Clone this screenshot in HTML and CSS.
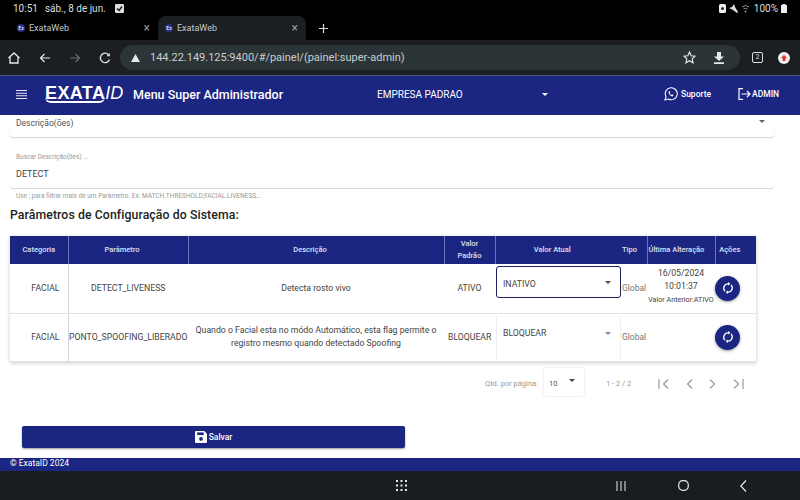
FILE: index.html
```html
<!DOCTYPE html>
<html lang="pt-BR">
<head>
    <meta charset="utf-8">
    <title>ExataWeb</title>
    <link rel="stylesheet" href="styles.css">
</head>
<body>
    <div class="status-bar">
        <div class="status-left">
            <span>10:51</span>
            <span class="status-date">sáb., 8 de jun.</span>
            <svg width="9" height="9" viewBox="0 0 9 9"><rect width="9" height="9" rx="1" fill="#ddd"/><path d="M2 4.5l2 2 3-4" fill="none" stroke="#111" stroke-width="1.3"/></svg>
        </div>
        <div class="status-right">
            <svg width="7" height="9" viewBox="0 0 7 9"><rect width="7" height="9" rx="1.5" fill="#eee"/><circle cx="3.5" cy="4.5" r="1.5" fill="#222"/></svg>
            <svg width="9" height="9" viewBox="0 0 9 9"><path d="M0 4l3-1 2-3 1 3 3 5-1 1-4-3z" fill="#ddd"/></svg>
            <svg width="9" height="9" viewBox="0 0 9 9" fill="none" stroke="#999"><path d="M1 3q3.500-3 7 0M2.500 5q2-1.500 4 0"/><circle cx="4.500" cy="7.500" r=".6" fill="#999"/></svg>
            <span>100%</span>
            <svg width="6" height="9" viewBox="0 0 6 9"><path d="M1.500 0h3v1H6v8H0V1h1.500z" fill="#eee"/></svg>
        </div>
    </div>

    <div class="tab-strip">
        <div class="tab">
            <span class="favicon">Ex</span>
            <span class="tab-title">ExataWeb</span>
            <span class="tab-close">×</span>
        </div>
        <div class="tab tab-active">
            <span class="favicon">Ex</span>
            <span class="tab-title">ExataWeb</span>
            <span class="tab-close">×</span>
        </div>
        <svg class="tab-new" width="9" height="9" viewBox="0 0 9 9"><path d="M4.500 0v9M0 4.500h9" stroke="#ddd" stroke-width="1.200"/></svg>
    </div>

    <div class="toolbar">
        <svg width="14" height="14" viewBox="0 0 14 14" fill="none" stroke="#e8e8e8" stroke-width="1.300"><path d="M1.500 7L7 2l5.500 5M3 6v6h8V6"/></svg>
        <svg class="tool-back" width="12" height="12" viewBox="0 0 12 12" fill="none" stroke="#e8e8e8" stroke-width="1.200"><path d="M11 6H1.500M5.500 2L1.500 6l4 4"/></svg>
        <svg class="tool-forward" width="12" height="12" viewBox="0 0 12 12" fill="none" stroke="#6a6e70" stroke-width="1.200"><path d="M1 6h9.500M6.500 2l4 4-4 4"/></svg>
        <svg class="tool-reload" width="12" height="12" viewBox="0 0 12 12" fill="none" stroke="#e8e8e8" stroke-width="1.300"><path d="M10.500 7.500A4.700 4.700 0 1 1 9.500 2.700"/><path d="M10.800 1v3.300H7.500z" fill="#e8e8e8" stroke="none"/></svg>
        <div class="omnibox">
            <svg width="9" height="8" viewBox="0 0 9 8"><path d="M4.500 0L9 8H0z" fill="#e8e8e8"/></svg>
            <span class="url">144.22.149.125:9400/#/painel/(painel:super-admin)</span>
            <svg class="omni-star" width="13" height="13" viewBox="0 0 13 13" fill="none" stroke="#e8e8e8" stroke-width="1.100"><path d="M6.500 1l1.700 3.700 4 .4-3 2.700.9 4-3.600-2.100-3.600 2.100.9-4-3-2.700 4-.4z"/></svg>
            <svg class="omni-download" width="12" height="12" viewBox="0 0 12 12" fill="#e8e8e8"><path d="M4 0h4v4.500h3L6 9 1 4.500h3zM1 10.300h10V12H1z"/></svg>
        </div>
        <span class="tab-count">2</span>
        <svg class="profile" width="12" height="12" viewBox="0 0 12 12"><circle cx="6" cy="6" r="6" fill="#f4f0ee"/><path d="M6 2.800L9 6.300H7.300V9H4.700V6.300H3z" fill="#d9342b"/></svg>
    </div>

    <header class="app-header">
        <svg class="menu-icon" width="11" height="9" viewBox="0 0 11 9"><path d="M0 .5h11M0 3.200h11M0 5.800h11M0 8.500h11" stroke="#e6e8f4" stroke-width="1.100"/></svg>
        <span class="logo"><span class="logo-exata">EXATA</span><span class="logo-id">ID</span></span>
        <span class="app-title">Menu Super Administrador</span>
        <div class="company">
            <span>EMPRESA PADRAO</span>
            <span class="caret caret-white"></span>
        </div>
        <div class="support">
            <svg width="14" height="14" viewBox="0 0 14 14" fill="none" stroke="#fff" stroke-width="1.100"><path d="M1 13l1-3.400A6 6 0 1 1 4.400 12z"/><path d="M5 4.300c-.8.700-.6 2 .7 3.400s2.500 2 3.400 1.300l.3-.9-1.500-.8-.7.600c-.7-.3-1.300-1-1.600-1.700l.6-.6-.7-1.500z" fill="#fff" stroke="none"/></svg>
            <span>Suporte</span>
        </div>
        <div class="user">
            <svg width="13" height="12" viewBox="0 0 13 12" fill="none" stroke="#fff" stroke-width="1.200"><path d="M5 .7H1v10.600h4M3.500 6H12M9 3l3 3-3 3"/></svg>
            <span>ADMIN</span>
        </div>
    </header>

    <main class="content">
        <div class="field field-select">
            <span>Descrição(ões)</span>
            <span class="caret caret-field"></span>
        </div>

        <div class="field field-search">
            <label class="field-label">Buscar Descrição(ões) ...</label>
            <span class="field-value">DETECT</span>
        </div>
        <p class="hint">Use ; para filtrar mais de um Parâmetro. Ex: MATCH.THRESHOLD;FACIAL.LIVENESS...</p>

        <h2 class="section-title">Parâmetros de Configuração do Sistema:</h2>

        <table class="params">
            <colgroup>
                <col class="col-cat">
                <col class="col-param">
                <col class="col-desc">
                <col class="col-default">
                <col class="col-current">
                <col class="col-type">
                <col class="col-date">
                <col class="col-actions">
            </colgroup>
            <thead>
                <tr>
                    <th class="th-center">Categoria</th>
                    <th>Parâmetro</th>
                    <th>Descrição</th>
                    <th class="th-center">Valor Padrão</th>
                    <th class="no-line">Valor Atual</th>
                    <th class="th-left">Tipo</th>
                    <th class="th-left">Última Alteração</th>
                    <th>Ações</th>
                </tr>
            </thead>
            <tbody>
                <tr>
                    <td class="cell-cat">FACIAL</td>
                    <td class="cell-line">DETECT_LIVENESS</td>
                    <td>Detecta rosto vivo</td>
                    <td>ATIVO</td>
                    <td class="cell-select">
                        <div class="value-select value-select-focus">
                            <span class="value-text">INATIVO</span>
                            <span class="caret caret-dark"></span>
                        </div>
                    </td>
                    <td class="cell-type">Global</td>
                    <td class="cell-date">
                        <div>16/05/2024</div>
                        <div>10:01:37</div>
                        <div class="previous">Valor Anterior:ATIVO</div>
                    </td>
                    <td class="cell-action"><button class="round-btn"><svg width="12" height="12" viewBox="0 0 12 12" fill="none" stroke="#fff" stroke-width="1.300"><path d="M6 1.800A4.200 4.200 0 0 0 3 9M6 10.200A4.200 4.200 0 0 0 9 3"/><path d="M6 0l2.500 1.800L6 3.600zM6 12l-2.500-1.800L6 8.400z" fill="#fff" stroke="none"/></svg></button></td>
                </tr>
                <tr>
                    <td class="cell-cat">FACIAL</td>
                    <td class="cell-line">PONTO_SPOOFING_LIBERADO</td>
                    <td>Quando o Facial esta no módo Automático, esta flag permite o registro mesmo quando detectado Spoofing</td>
                    <td>BLOQUEAR</td>
                    <td class="cell-select">
                        <div class="value-select">
                            <span>BLOQUEAR</span>
                            <span class="caret caret-muted"></span>
                        </div>
                    </td>
                    <td class="cell-type">Global</td>
                    <td class="cell-date"></td>
                    <td class="cell-action"><button class="round-btn"><svg width="12" height="12" viewBox="0 0 12 12" fill="none" stroke="#fff" stroke-width="1.300"><path d="M6 1.800A4.200 4.200 0 0 0 3 9M6 10.200A4.200 4.200 0 0 0 9 3"/><path d="M6 0l2.500 1.800L6 3.600zM6 12l-2.500-1.800L6 8.400z" fill="#fff" stroke="none"/></svg></button></td>
                </tr>
            </tbody>
        </table>

        <div class="pager">
            <span class="pager-label">Qtd. por página:</span>
            <div class="pager-size">
                <span>10</span>
                <span class="caret caret-dark"></span>
            </div>
            <span class="pager-range">1 - 2 / 2</span>
            <div class="pager-icons">
                <svg width="12" height="10" viewBox="0 0 12 10" fill="none" stroke="#9a9a9a" stroke-width="1.200"><path d="M1 0v10M10 .5L5.500 5l4.500 4.500"/></svg>
                <svg width="7" height="10" viewBox="0 0 7 10" fill="none" stroke="#9a9a9a" stroke-width="1.200"><path d="M6 .5L1.500 5 6 9.500"/></svg>
                <svg width="7" height="10" viewBox="0 0 7 10" fill="none" stroke="#9a9a9a" stroke-width="1.200"><path d="M1 .5L5.500 5 1 9.500"/></svg>
                <svg width="12" height="10" viewBox="0 0 12 10" fill="none" stroke="#9a9a9a" stroke-width="1.200"><path d="M11 0v10M2 .5L6.500 5 2 9.500"/></svg>
            </div>
        </div>

        <button class="save-btn">
            <svg width="12" height="12" viewBox="0 0 11 11"><path d="M1 0h7.500L11 2.500V10a1 1 0 0 1-1 1H1a1 1 0 0 1-1-1V1a1 1 0 0 1 1-1z" fill="#fff"/><rect x="2" y="1.300" width="6" height="2.400" fill="#1b2582"/><circle cx="5.500" cy="7.300" r="1.700" fill="#1b2582"/></svg>
            <span>Salvar</span>
        </button>
    </main>

    <footer class="app-footer">© ExataID 2024</footer>

    <div class="nav-bar">
        <svg class="nav-grid" width="11" height="11" viewBox="0 0 11 11" fill="#e8e8e8">
            <rect x="0" y="0" width="2" height="2"/><rect x="4.500" y="0" width="2" height="2"/><rect x="9" y="0" width="2" height="2"/>
            <rect x="0" y="4.500" width="2" height="2"/><rect x="4.500" y="4.500" width="2" height="2"/><rect x="9" y="4.500" width="2" height="2"/>
            <rect x="0" y="9" width="2" height="2"/><rect x="4.500" y="9" width="2" height="2"/><rect x="9" y="9" width="2" height="2"/>
        </svg>
        <svg class="nav-recent" width="10" height="10" viewBox="0 0 10 10" stroke="#c8c8c8" stroke-width="1.200"><path d="M1 0v10M5 0v10M9 0v10"/></svg>
        <svg class="nav-home" width="11" height="11" viewBox="0 0 11 11" fill="none" stroke="#e8e8e8" stroke-width="1.200"><rect x=".7" y=".7" width="9.600" height="9.600" rx="4"/></svg>
        <svg class="nav-back" width="7" height="12" viewBox="0 0 7 12" fill="none" stroke="#e8e8e8" stroke-width="1.200"><path d="M6 .5L.8 6 6 11.500"/></svg>
    </div>
</body>
</html>
```

FILE: styles.css
```css
* {
    box-sizing: border-box;
}
html, body {
    height: 100%;
}
body {
    margin: 0;
    width: 800px;
    height: 500px;
    overflow: hidden;
    display: flex;
    flex-direction: column;
    font-family: Roboto, "Liberation Sans", sans-serif;
    background-color: #fff;
    color: #333;
}

/* Android status bar */
.status-bar {
    height: 16px;
    padding: 0 13px;
    display: flex;
    align-items: center;
    justify-content: space-between;
    background-color: #000;
    color: #ddd;
    font-size: 10px;
}
.status-left,
.status-right {
    display: flex;
    align-items: center;
    gap: 7px;
}
.status-left svg {
    margin-left: 2px;
}
.status-right {
    gap: 3px;
}
.status-right span {
    margin-left: 1px;
}

/* Browser chrome */
.tab-strip {
    height: 24px;
    padding-left: 10px;
    display: flex;
    align-items: stretch;
    background-color: #000;
}
.tab {
    width: 148px;
    padding: 0 8px 0 7px;
    display: flex;
    align-items: center;
    color: #c4c7c8;
    font-size: 9px;
}
.tab-active {
    background-color: #1b1f22;
    border-radius: 8px 8px 0 0;
}
.favicon {
    width: 8px;
    height: 8px;
    margin-right: 4px;
    border-radius: 50%;
    background-color: #2b2f86;
    color: #fff;
    font-size: 5px;
    line-height: 8px;
    text-align: center;
}
.tab-title {
    flex: 1;
}
.tab-close {
    color: #999;
    font-size: 12px;
}
.tab-new {
    align-self: center;
    margin-left: 13px;
}
.toolbar {
    height: 35px;
    padding-left: 7px;
    display: flex;
    align-items: center;
    background-color: #1b1f22;
}
.toolbar svg,
.toolbar .tab-count {
    flex-shrink: 0;
}
.tool-back,
.tool-forward,
.tool-reload {
    margin-left: 18px;
}
.omnibox {
    flex-shrink: 0;
    width: 620px;
    height: 25px;
    margin-left: 9px;
    padding: 0 15px 0 11px;
    display: flex;
    align-items: center;
    background-color: #2b3437;
    border-radius: 13px;
    color: #c9cdce;
    font-size: 11px;
}
.url {
    flex: 1;
    margin-left: 10px;
}
.omni-download {
    margin-left: 17px;
}
.tab-count {
    width: 11px;
    height: 11px;
    margin-left: 12px;
    border: 1px solid #ddd;
    border-radius: 2px;
    color: #ddd;
    font-size: 7px;
    line-height: 9px;
    text-align: center;
}
.profile {
    margin-left: 15px;
}

/* App header */
.app-header {
    height: 40px;
    padding: 0 16px 3px;
    display: flex;
    align-items: center;
    background-color: #1b2582;
    border-top: 1px solid #525a8c;
    color: #fff;
}
.logo {
    width: 78px;
    margin-left: 18px;
    font-family: "Liberation Sans", sans-serif;
    font-size: 18px;
    font-weight: bold;
    line-height: 17px;
    white-space: nowrap;
}
.logo-exata {
    display: inline-block;
    border-bottom: 2px solid #fff;
    border-radius: 0 0 6px 6px;
    line-height: 15px;
    letter-spacing: .4px;
}
.logo-id {
    font-weight: normal;
    font-style: italic;
}
.app-title {
    width: 244px;
    margin-left: 10px;
    font-size: 12.500px;
    font-weight: 500;
}
.company {
    width: 171px;
    display: flex;
    align-items: center;
    justify-content: space-between;
    font-size: 10px;
}
.support {
    margin-left: 116px;
    display: flex;
    align-items: center;
    gap: 3px;
    font-size: 8.500px;
    font-weight: 500;
}
.user {
    margin-left: 27px;
    display: flex;
    align-items: center;
    gap: 1px;
    font-size: 8.500px;
    font-weight: 500;
}

/* Select carets */
.caret {
    flex-shrink: 0;
    width: 0;
    height: 0;
    border-left: 3.500px solid transparent;
    border-right: 3.500px solid transparent;
    border-top: 3.500px solid #444;
}
.caret-white {
    border-top-color: #fff;
}
.caret-muted {
    border-top-color: #888;
}
.caret-field {
    margin-top: -3px;
    border-top-color: #666;
}

/* Main content */
.content {
    flex: 1;
    display: flex;
    flex-direction: column;
    overflow: hidden;
    background-color: #fff;
}
.field {
    width: 764px;
    margin-left: 10px;
    background-color: #fff;
    border-radius: 3px;
    box-shadow: 0 1px 1px rgba(0, 0, 0, .16);
}
.field-select {
    height: 22px;
    padding: 0 9px 6px 6px;
    display: flex;
    align-items: center;
    justify-content: space-between;
    color: #555;
    font-size: 8.500px;
}
.field-search {
    height: 38px;
    margin-top: 13px;
    padding: 3px 6px 0;
    display: flex;
    flex-direction: column;
}
.field-label {
    color: #999;
    font-size: 6.500px;
}
.field-value {
    margin-top: 8px;
    color: #444;
    font-size: 9px;
}
.hint {
    margin: 4px 0 0 16px;
    color: #999;
    font-size: 6.500px;
}
.section-title {
    margin: 8px 0 0 10px;
    color: #222;
    font-size: 12.250px;
    font-weight: 500;
    letter-spacing: .1px;
}

/* Parameters table */
.params {
    width: 746px;
    margin: 14px 0 0 10px;
    border-collapse: collapse;
    table-layout: fixed;
    box-shadow: 0 1px 4px rgba(0, 0, 0, .22);
    font-size: 8.700px;
    color: #444;
}
.col-cat { width: 58px; }
.col-param { width: 120px; }
.col-desc { width: 256px; }
.col-default { width: 51px; }
.col-current { width: 126px; }
.col-type { width: 26px; }
.col-date { width: 68px; }
.col-actions { width: 41px; }
.params th {
    height: 28px;
    padding: 0 12px 0 0;
    background-color: #1b2582;
    border-right: 1px solid #6e75b5;
    color: #dfe1f0;
    font-size: 7.500px;
    font-weight: 500;
    line-height: 12px;
}
.params th:last-child,
.params th.no-line {
    border-right: 0;
}
.params th.th-center {
    padding: 0 4px;
}
.params th.th-left {
    padding: 0 0 0 1px;
    text-align: left;
    white-space: nowrap;
}
.params td {
    height: 48px;
    padding: 0 4px;
    border-bottom: 1px solid #e3e3e3;
    text-align: center;
    line-height: 13px;
}
.params tbody tr:first-child td {
    height: 49px;
}
.params td.cell-cat {
    padding: 0 8px 0 0;
    text-align: right;
}
.params td.cell-line {
    padding: 0;
    border-left: 1px solid #d4d6e6;
    white-space: nowrap;
}
.params td.cell-select {
    padding: 0 0 0 1px;
    vertical-align: top;
}
.params td.cell-type {
    padding: 0 0 0 1px;
    color: #777;
    text-align: left;
    font-size: 8.500px;
}
.params td.cell-date {
    padding: 0 0 3px;
}
.previous {
    font-size: 7.200px;
    line-height: 14px;
    white-space: nowrap;
}
.params td.cell-action {
    padding: 0;
}
.value-select {
    height: 46px;
    margin-top: 1px;
    padding: 0 9px 8px 6px;
    display: flex;
    align-items: center;
    justify-content: space-between;
    border-left: 1px solid #eee;
    border-right: 1px solid #eee;
    font-size: 8.700px;
    text-align: left;
}
.value-select-focus {
    height: 32px;
    margin-top: 2px;
    padding: 0 9px 0 6px;
    border: 1.500px solid #1b2060;
    border-radius: 3px;
}
.value-text {
    margin-top: 4px;
}
.round-btn {
    width: 25px;
    height: 25px;
    padding: 0;
    display: flex;
    align-items: center;
    justify-content: center;
    border: 0;
    border-radius: 50%;
    background-color: #1b2582;
    box-shadow: 0 1px 3px rgba(0, 0, 0, .4);
}

/* Pagination */
.pager {
    width: 746px;
    height: 30px;
    margin: 5px 0 0 10px;
    padding-left: 475px;
    display: flex;
    align-items: center;
    color: #999;
    font-size: 7.500px;
}
.pager-label,
.pager-range {
    margin-top: 4px;
}
.pager-size {
    width: 40px;
    height: 28px;
    margin-left: 6px;
    padding: 0 9px 0 5px;
    display: flex;
    align-items: center;
    justify-content: space-between;
    border-radius: 2px;
    box-shadow: 0 0 2px rgba(0, 0, 0, .2);
    color: #555;
}
.pager-size span:first-child {
    margin-top: 3px;
}
.pager-size .caret {
    margin-top: -2px;
}
.pager-range {
    margin-left: 22px;
}
.pager-icons {
    margin: 5px 0 0 27px;
    display: flex;
    align-items: center;
    gap: 16px;
}

.save-btn {
    width: 383px;
    height: 22px;
    margin: 29px 0 0 22px;
    padding: 0;
    display: flex;
    align-items: center;
    justify-content: center;
    gap: 2px;
    border: 0;
    border-radius: 2px;
    background-color: #1b2582;
    box-shadow: 0 1px 2px rgba(0, 0, 0, .4);
    color: #fff;
    font-family: inherit;
    font-size: 8.500px;
    font-weight: 500;
}

/* Footer and Android nav */
.app-footer {
    height: 13px;
    padding-left: 10px;
    background-color: #1b2582;
    color: #fff;
    font-size: 8.500px;
    line-height: 11px;
}
.nav-bar {
    height: 29px;
    display: flex;
    align-items: center;
    background-color: #1a1d20;
}
.nav-grid {
    margin-left: 396px;
}
.nav-recent {
    margin-left: 209px;
}
.nav-home {
    margin-left: 52px;
}
.nav-back {
    margin-left: 51px;
}
```
